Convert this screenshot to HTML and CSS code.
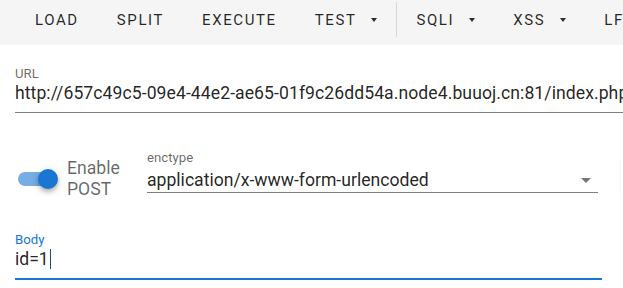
FILE: index.html
```html
<!DOCTYPE html>
<html lang="en">
<head>
    <meta charset="UTF-8">
    <meta name="viewport" content="width=device-width, initial-scale=1.0">
    <title>HackBar</title>
    <link rel="stylesheet" href="styles.css">
</head>
<body>
    <div class="toolbar">
        <button class="tb-btn">Load</button>
        <button class="tb-btn">Split</button>
        <button class="tb-btn">Execute</button>
        <button class="tb-btn">Test<span class="caret"></span></button>
        <span class="divider"></span>
        <button class="tb-btn">SQLI<span class="caret"></span></button>
        <button class="tb-btn">XSS<span class="caret"></span></button>
        <button class="tb-btn">LFI<span class="caret"></span></button>
    </div>

    <main class="content">
        <div class="field url-field">
            <div class="field-label">URL</div>
            <div class="field-value">http://657c49c5-09e4-44e2-ae65-01f9c26dd54a.node4.buuoj.cn:81/index.php</div>
        </div>

        <div class="row">
            <div class="switch-box">
                <span class="switch">
                    <span class="track"></span>
                    <span class="thumb"></span>
                </span>
                <span class="switch-label">Enable POST</span>
            </div>
            <div class="field select-field">
                <div class="field-label">enctype</div>
                <div class="field-value">application/x-www-form-urlencoded<span class="select-arrow"></span></div>
            </div>
            <div class="side-card"></div>
        </div>

        <div class="field body-field">
            <div class="field-label">Body</div>
            <div class="field-value">id=1<span class="cursor"></span></div>
        </div>
    </main>
</body>
</html>
```

FILE: styles.css
```css
html, body {
    margin: 0;
    overflow: hidden;
    background: #fff;
    font-family: Roboto, "Liberation Sans", sans-serif;
}
.toolbar {
    display: flex;
    align-items: flex-start;
    height: 45px;
    box-sizing: border-box;
    padding: 2px 0 0 16px;
    background: #f5f5f5;
    white-space: nowrap;
    overflow: hidden;
}
.tb-btn {
    display: flex;
    align-items: center;
    flex-shrink: 0;
    height: 36px;
    margin: 0 3px;
    padding: 0 16px;
    border: none;
    background: none;
    font-family: Roboto, "Liberation Sans", sans-serif;
    font-size: 15px;
    font-weight: 400;
    letter-spacing: 1.6px;
    text-transform: uppercase;
    color: rgba(0, 0, 0, 0.85);
    cursor: pointer;
}
.caret {
    width: 0;
    height: 0;
    margin-left: 15px;
    border-left: 3.5px solid transparent;
    border-right: 3.5px solid transparent;
    border-top: 4px solid rgba(0, 0, 0, 0.82);
}
.divider {
    flex-shrink: 0;
    width: 1px;
    height: 35px;
    background: rgba(0, 0, 0, 0.12);
}
.content {
    width: 900px;
    padding: 0 0 0 15px;
}
.field-label {
    font-size: 13.2px;
    line-height: 15px;
    color: rgba(0, 0, 0, 0.6);
}
.field-value {
    font-size: 17.6px;
    line-height: 24px;
    color: rgba(0, 0, 0, 0.87);
    white-space: nowrap;
}
.url-field {
    margin-top: 21px;
    padding-bottom: 7px;
    border-bottom: 1px solid rgba(0, 0, 0, 0.5);
}
.url-field .field-value {
    letter-spacing: 0.07px;
}
.row {
    display: flex;
    align-items: flex-start;
    margin-top: 37px;
}
.switch-box {
    display: flex;
    align-items: center;
    width: 129px;
    margin-top: 8px;
    padding-left: 3px;
}
.switch {
    position: relative;
    width: 40px;
    height: 20px;
    flex-shrink: 0;
}
.track {
    position: absolute;
    left: 0;
    top: 3px;
    width: 36px;
    height: 14px;
    border-radius: 7px;
    background: rgba(25, 118, 210, 0.6);
}
.thumb {
    position: absolute;
    left: 20px;
    top: 0;
    width: 20px;
    height: 20px;
    border-radius: 50%;
    background: #1976d2;
    box-shadow: 0 2px 4px -1px rgba(0, 0, 0, 0.2), 0 4px 5px 0 rgba(0, 0, 0, 0.14), 0 1px 10px 0 rgba(0, 0, 0, 0.12);
}
.switch-label {
    width: 60px;
    margin-left: 9px;
    font-size: 17.6px;
    line-height: 21px;
    color: rgba(0, 0, 0, 0.6);
}
.select-field {
    width: 451px;
    border-bottom: 1px solid rgba(0, 0, 0, 0.5);
}
.select-field .field-value {
    display: flex;
    justify-content: space-between;
    align-items: center;
    margin-top: 3px;
}
.select-arrow {
    width: 0;
    height: 0;
    margin-right: 7px;
    border-left: 5px solid transparent;
    border-right: 5px solid transparent;
    border-top: 5px solid rgba(0, 0, 0, 0.54);
}
.side-card {
    width: 100px;
    height: 44px;
    margin: 6px 0 0 23px;
    border-radius: 4px;
    background: #fff;
    box-shadow: 0 0 2px rgba(0, 0, 0, 0.08);
}
.body-field {
    width: 587px;
    margin-top: 32px;
    padding-bottom: 7px;
    border-bottom: 2px solid #1976d2;
}
.body-field .field-label {
    color: #1976d2;
}
.cursor {
    display: inline-block;
    width: 1px;
    height: 20px;
    margin-left: 1px;
    vertical-align: -4px;
    background: #1a4f8a;
}
```
